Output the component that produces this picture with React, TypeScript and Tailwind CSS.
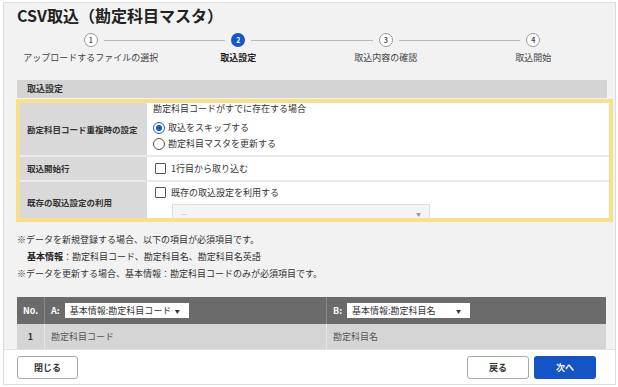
import React from "react"

const steps = [
  { n: 1, label: "アップロードするファイルの選択" },
  { n: 2, label: "取込設定", active: true },
  { n: 3, label: "取込内容の確認" },
  { n: 4, label: "取込開始" },
]

function Stepper() {
  return (
    <div className="grid grid-cols-4 mt-[8px]">
      {steps.map((s, i) => (
        <div key={s.n} className="flex flex-col items-center">
          <div className="flex items-center w-full">
            <div className={`flex-1 h-px mr-[6px] ${i === 0 ? "" : "bg-[#b8b8b8]"}`} />
            {s.active ? (
              <div className="w-[14px] h-[14px] rounded-full bg-[#1a55c3] text-white text-[7px] font-bold flex items-center justify-center leading-none">
                {s.n}
              </div>
            ) : (
              <div className="w-[14px] h-[14px] rounded-full border border-[#9a9a9a] bg-white text-[#555] text-[7px] font-bold flex items-center justify-center leading-none">
                {s.n}
              </div>
            )}
            <div className={`flex-1 h-px ml-[6px] ${i === steps.length - 1 ? "" : "bg-[#b8b8b8]"}`} />
          </div>
          <div className={`mt-[5px] leading-[12px] text-[9px] ${s.active ? "font-bold text-[#222]" : "text-[#444]"}`}>
            {s.label}
          </div>
        </div>
      ))}
    </div>
  )
}

function Radio({ checked, label }: { checked?: boolean; label: string }) {
  return (
    <label className="flex items-center h-[16px] gap-[3px]">
      <span
        className={`w-[12px] h-[12px] rounded-full border flex items-center justify-center bg-white ${
          checked ? "border-[#1a55c3]" : "border-[#555]"
        }`}
      >
        {checked && <span className="w-[6px] h-[6px] rounded-full bg-[#1a55c3]" />}
      </span>
      <span className="text-[9px] text-[#333]">{label}</span>
    </label>
  )
}

function Checkbox({ label }: { label: string }) {
  return (
    <label className="flex items-center gap-[5px] pl-[2px]">
      <span className="w-[11px] h-[11px] border border-[#555] rounded-[1px] bg-white" />
      <span className="text-[9px] text-[#333]">{label}</span>
    </label>
  )
}

function HeaderSelect({ value, width }: { value: string; width: string }) {
  return (
    <div className={`${width} h-[15px] bg-white flex items-center justify-between pl-[5px] pr-[9px] text-[9px] font-normal text-[#333]`}>
      <span>{value}</span>
      <span className="text-[5px] text-[#333]">▼</span>
    </div>
  )
}

export default function App() {
  return (
    <div
      className="mt-[2px] ml-[3px] w-[613px] h-[383px] border border-[#dcdcdc] bg-[#f2f2f2] flex flex-col overflow-hidden"
      style={{ fontFamily: '"Noto Sans CJK JP", "Noto Sans", sans-serif' }}
    >
      <div className="flex-1 min-h-0 overflow-hidden pl-[13px] pr-[8px]">
        <h1 className="mt-[2px] leading-[20px] text-[16px] font-bold text-[#222]">CSV取込（勘定科目マスタ）</h1>

        <Stepper />

        <div className="mt-[16px] h-[18px] bg-[#d4d4d4] flex items-center pl-[10px] text-[9px] font-bold text-[#333]">
          取込設定
        </div>

        <div className="mt-px -ml-[1px] -mr-[6px] border-[4px] border-[#f8df8a]">
          <div className="flex border-b-2 border-[#e9e9e9]">
            <div className="w-[127px] bg-[#d9d9d9] flex items-center pl-[7px] text-[8.5px] font-bold text-[#333]">
              勘定科目コード重複時の設定
            </div>
            <div className="flex-1 bg-white pl-[6px] pb-[3px]">
              <div className="h-[12px] leading-[12px] text-[9px] text-[#333]">勘定科目コードがすでに存在する場合</div>
              <div className="mt-[5px]">
                <Radio checked label="取込をスキップする" />
                <Radio label="勘定科目マスタを更新する" />
              </div>
            </div>
          </div>
          <div className="flex h-[25px] border-b-2 border-[#e9e9e9]">
            <div className="w-[127px] bg-[#d9d9d9] flex items-center pl-[7px] text-[8.5px] font-bold text-[#333]">
              取込開始行
            </div>
            <div className="flex-1 bg-white flex items-center pl-[6px]">
              <Checkbox label="1行目から取り込む" />
            </div>
          </div>
          <div className="flex h-[36px]">
            <div className="w-[127px] bg-[#d9d9d9] flex items-center pl-[7px] pt-[4px] text-[8.5px] font-bold text-[#333]">
              既存の取込設定の利用
            </div>
            <div className="flex-1 bg-white pl-[6px] pt-[4px] overflow-hidden">
              <Checkbox label="既存の取込設定を利用する" />
              <div className="mt-[4px] ml-[19px] w-[258px] h-[20px] bg-[#f4f4f4] border border-[#dedede] flex items-center justify-between pl-[8px] pr-[8px]">
                <span className="text-[8px] text-[#aaa]">--</span>
                <span className="text-[5px] text-[#999]">▼</span>
              </div>
            </div>
          </div>
        </div>

        <div className="mt-[9px] text-[9px] text-[#333]">
          <div className="h-[17px] flex items-center">※データを新規登録する場合、以下の項目が必須項目です。</div>
          <div className="h-[17px] flex items-center pl-[10px]">
            <span className="font-bold text-[#222]">基本情報</span>
            <span>：勘定科目コード、勘定科目名、勘定科目名英語</span>
          </div>
          <div className="h-[17px] flex items-center">※データを更新する場合、基本情報：勘定科目コードのみが必須項目です。</div>
        </div>

        <div className="mt-[15px] pr-px">
          <div className="flex h-[27px] bg-[#6b6b6b] text-white text-[9px] font-bold">
            <div className="w-[28px] flex items-center justify-center border-r border-[#8a8a8a]">No.</div>
            <div className="w-[282px] flex items-center gap-[5px] pl-[6px] border-r border-[#8a8a8a]">
              <span>A:</span>
              <HeaderSelect value="基本情報:勘定科目コード" width="w-[124px]" />
            </div>
            <div className="flex-1 flex items-center gap-[5px] pl-[6px]">
              <span>B:</span>
              <HeaderSelect value="基本情報:勘定科目名" width="w-[123px]" />
            </div>
          </div>
          <div className="flex h-[25px] bg-[#d5d5d5] text-[9px]">
            <div className="w-[28px] flex items-center justify-center border-r border-[#e6e6e6] font-bold text-[#333]">1</div>
            <div className="w-[282px] flex items-center pl-[6px] border-r border-[#e6e6e6] text-[#555]">勘定科目コード</div>
            <div className="flex-1 flex items-center pl-[6px] text-[#555]">勘定科目名</div>
          </div>
        </div>
      </div>

      <div className="h-[35px] shrink-0 bg-white border-t border-[#e3e3e3] flex items-start pt-[6px] pl-[13px] pr-[19px]">
        <button className="w-[61px] h-[23px] border border-[#a9a9a9] rounded-[3px] bg-white text-[9px] font-bold text-[#333]">
          閉じる
        </button>
        <div className="flex-1" />
        <button className="w-[62px] h-[23px] border border-[#a9a9a9] rounded-[3px] bg-white text-[9px] font-bold text-[#333]">
          戻る
        </button>
        <button className="ml-[5px] w-[62px] h-[23px] rounded-[3px] bg-[#1554c4] text-[9px] font-bold text-white">
          次へ
        </button>
      </div>
    </div>
  )
}
